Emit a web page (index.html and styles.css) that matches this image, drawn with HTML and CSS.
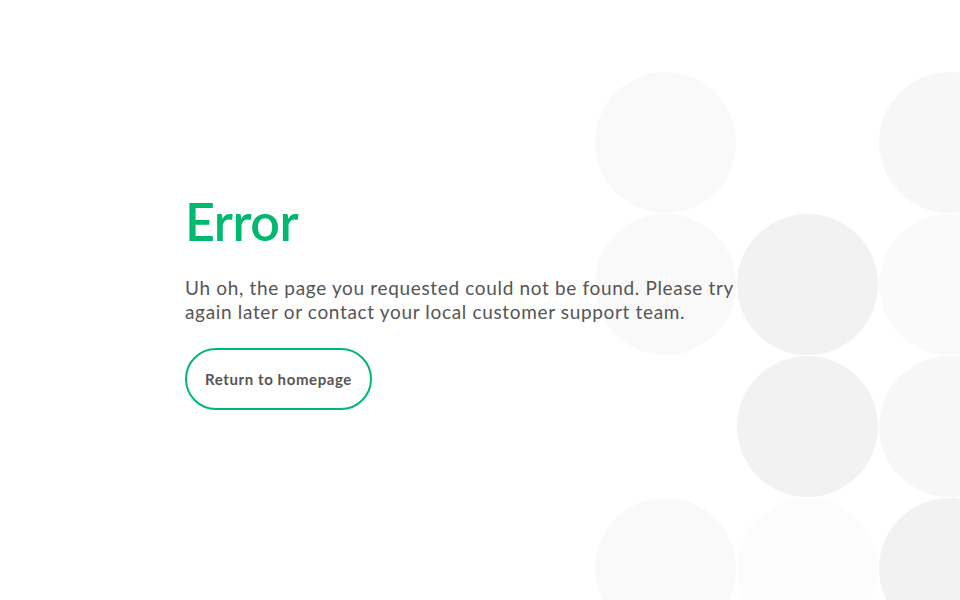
FILE: index.html
```html
<!DOCTYPE html>
<html lang="en">
<head>
<meta charset="utf-8">
<title>Error</title>
<link rel="stylesheet" href="styles.css">
</head>
<body>
<div class="page">
  <div class="bubbles" aria-hidden="true">
    <span class="dot c-soft"></span><span class="dot c-none"></span><span class="dot c-soft2"></span>
    <span class="dot c-soft"></span><span class="dot c-mid"></span><span class="dot c-faint"></span>
    <span class="dot c-none"></span><span class="dot c-mid"></span><span class="dot c-soft2"></span>
    <span class="dot c-soft"></span><span class="dot c-faint2"></span><span class="dot c-mid"></span>
  </div>
  <main class="content">
    <h1 class="title">Error</h1>
    <p class="message">Uh oh, the page you requested could not be found. Please try again later or contact your local customer support team.</p>
    <a class="btn" href="#">Return to homepage</a>
  </main>
</div>
</body>
</html>
```
FILE: styles.css
```css
* { box-sizing: border-box; }
html, body { margin: 0; padding: 0; background: #fff; }
body { font-family: Lato, "Noto Sans", sans-serif; }

.page {
  position: relative;
  width: 960px;
  height: 600px;
  overflow: hidden;
  display: flex;
  align-items: center;
  padding-left: 185px;
}

.bubbles {
  position: absolute;
  left: 595px;
  top: 72px;
  display: grid;
  grid-template-columns: repeat(3, 141px);
  grid-auto-rows: 141px;
  gap: 1px;
  z-index: 0;
}
.dot { display: block; width: 141px; height: 141px; border-radius: 50%; }
.c-none { background: transparent; }
.c-soft { background: #f9f9f9; }
.c-soft2 { background: #f7f7f7; }
.c-faint { background: #fafafa; }
.c-faint2 { background: #fcfcfc; }
.c-mid { background: #f2f2f2; }

.content {
  position: relative;
  z-index: 1;
  width: 565px;
}

.title {
  margin: 0 0 24px;
  font-size: 52px;
  line-height: 62px;
  font-weight: 600;
  color: #00b870;
  letter-spacing: -0.5px;
}

.message {
  margin: 0 0 24px;
  font-size: 19px;
  line-height: 24px;
  color: #555;
  letter-spacing: 0.66px;
}

.btn {
  display: inline-flex;
  align-items: center;
  justify-content: center;
  width: 187px;
  height: 62px;
  border: 2px solid #00b870;
  border-radius: 31px;
  color: #555;
  font-size: 15px;
  font-weight: 700;
  letter-spacing: 0.6px;
  text-decoration: none;
}
```
